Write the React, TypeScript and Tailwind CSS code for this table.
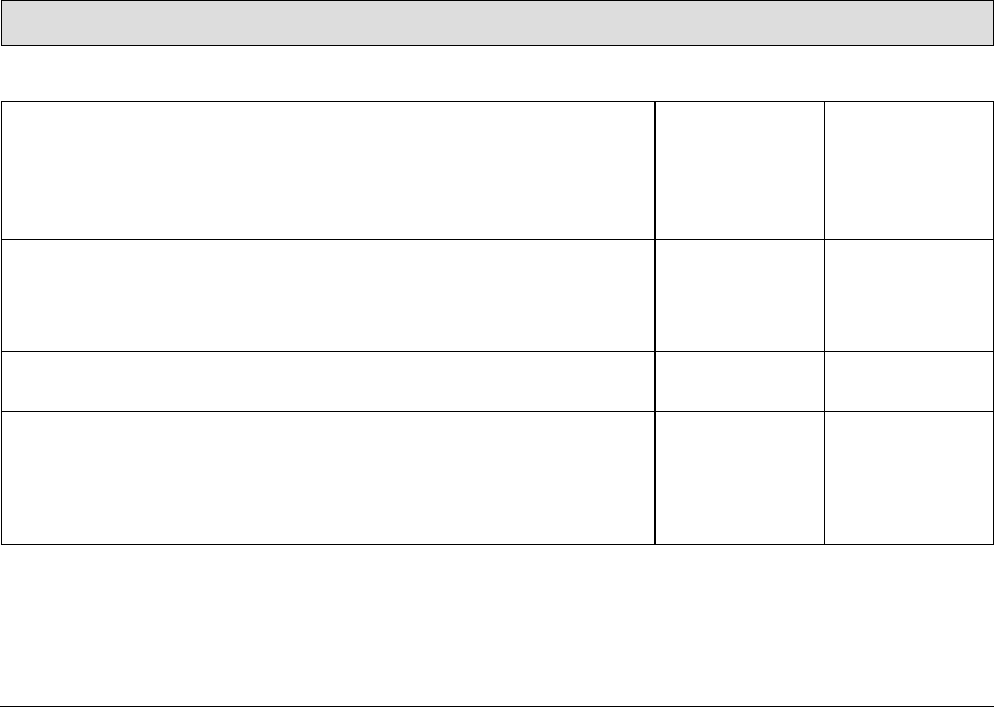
import React from 'react';

const rows = [
  { key: 'r1', height: 'h-[138px] border-b border-black' },
  { key: 'r2', height: 'h-[112px] border-b border-black' },
  { key: 'r3', height: 'h-[60px] border-b border-black' },
  { key: 'r4', height: 'h-[132px]' },
];

export default function App() {
  return (
    <div className="w-[995px] h-[708px] bg-white font-['Liberation_Sans',Arial,sans-serif] overflow-hidden">
      {/* Title bar */}
      <div className="ml-[1px] w-[993px] h-[46px] border border-black bg-[#dddddd]" />

      {/* Empty table */}
      <div className="mt-[55px] ml-[1px] w-[993px] border border-black">
        {rows.map((row) => (
          <div key={row.key} className={`grid grid-cols-[654px_169px_1fr] ${row.height}`}>
            <div className="border-r-2 border-black" />
            <div className="border-r border-black" />
            <div />
          </div>
        ))}
      </div>

      {/* Footer rule */}
      <div className="mt-[161px] w-[994px] border-t border-black" />
    </div>
  );
}
